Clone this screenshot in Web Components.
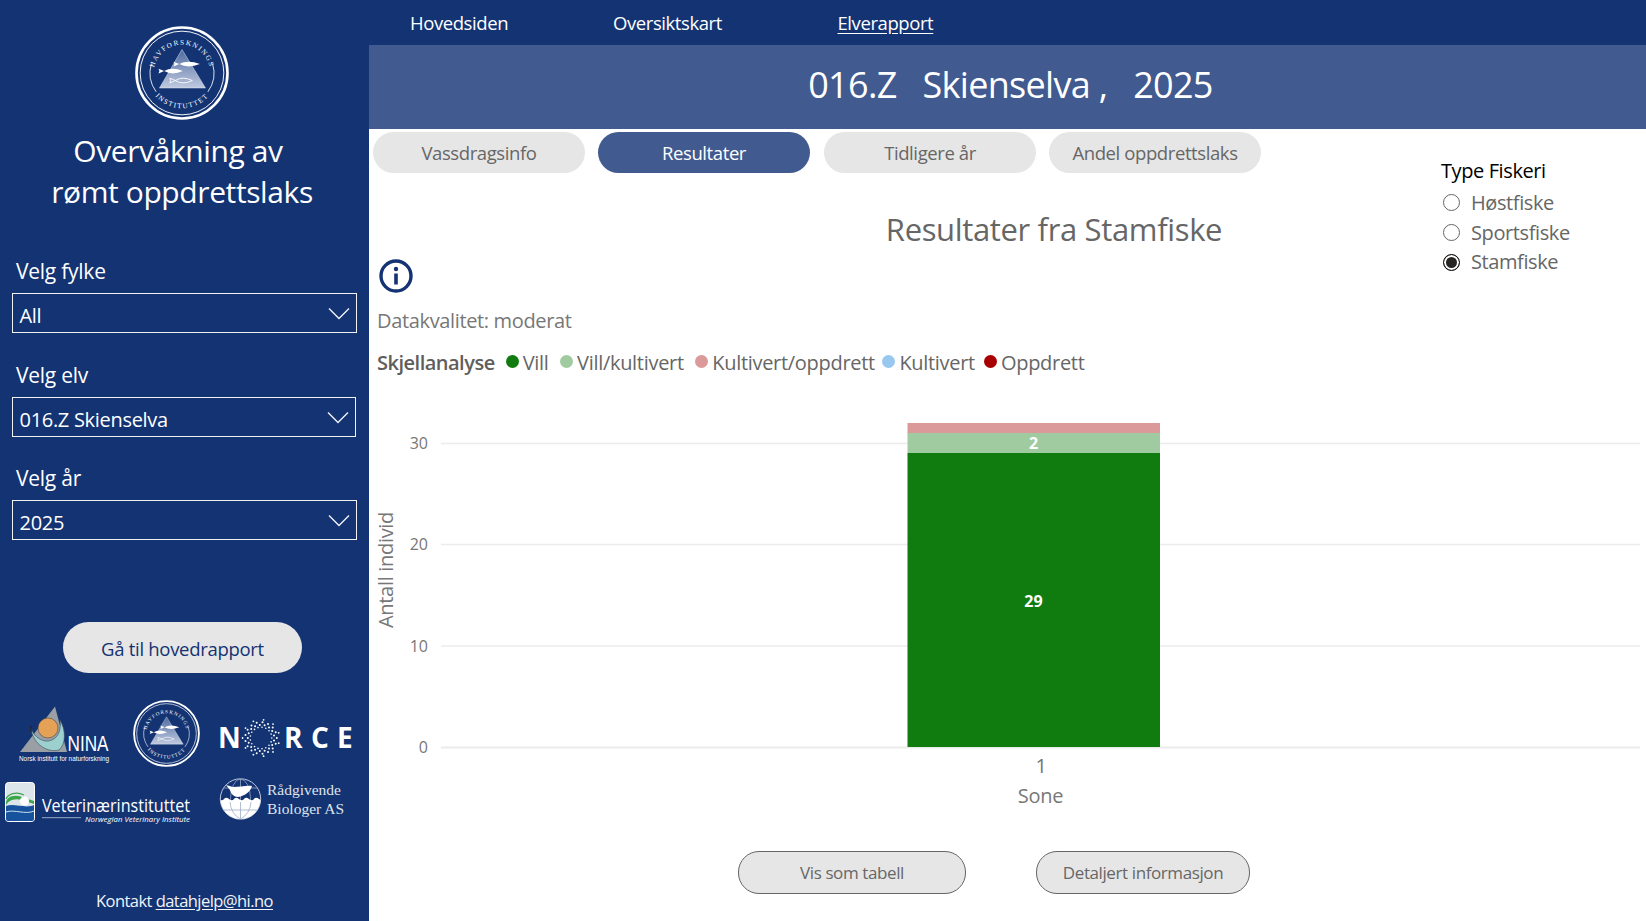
<!DOCTYPE html>
<html lang="no"><head><meta charset="utf-8"><title>Elverapport</title>
<style>
html,body{margin:0;padding:0;background:#fff;height:100%;overflow:hidden}
body{font-family:"Open Sans","Noto Sans",sans-serif;--navy:#133373;--blue:#415a8f;--grey:#e6e6e6;--txt:#666}
</style></head><body>
<app-shell>
  <side-bar slot="side"></side-bar>
  <top-nav slot="main"></top-nav>
  <title-banner slot="main">016.Z&nbsp;&nbsp; Skienselva ,&nbsp;&nbsp; 2025</title-banner>
  <result-view slot="main"></result-view>
</app-shell>
<script>
const def=(name,html,after)=>customElements.define(name,class extends HTMLElement{
  constructor(){super();const s=this.attachShadow({mode:'open'});s.innerHTML=typeof html==='function'?html(this):html;}
  connectedCallback(){const s=this.shadowRoot;if(typeof html==='function'&&!this._r){s.innerHTML=html(this);}this._r=1;if(after)after(s,this);}
});
const fish=(x0,x1,y,h,style)=>{const m=(x0+x1)/2,t=x0;return `<path d="M${x1} ${y}Q${m} ${y-h*2} ${t+3} ${y}L${t-3} ${y-h}L${t-2} ${y}L${t-3} ${y+h}L${t+3} ${y}Q${m} ${y+h*2} ${x1} ${y}Z" ${style}/>`};
def('hi-logo',h=>{const id='a'+Math.random().toString(36).slice(2,7);return `<style>:host{display:block;width:var(--s,94px);height:var(--s,94px)}svg{display:block;width:100%;height:100%}text{font-family:"Liberation Serif",serif;font-size:7.6px;fill:#fff;letter-spacing:1.5px}</style>
<svg viewBox="0 0 100 100" aria-label="Havforskningsinstituttet">
<defs><linearGradient id="${id}g" x1="0" y1="0" x2="0" y2="1"><stop offset="0" stop-color="#4f6aa0"/><stop offset="1" stop-color="#c0cae0"/></linearGradient>
<path id="${id}u" d="M20 50A30 30 0 0 1 80 50"/><path id="${id}l" d="M12.5 50A37.5 37.5 0 0 0 87.5 50"/></defs>
<circle cx="50" cy="50" r="48.4" fill="none" stroke="#fff" stroke-width="2.8"/><circle cx="50" cy="50" r="44.5" fill="none" stroke="#fff" stroke-width="1"/>
<path d="M17.5 40A34 34 0 0 0 22.5 70M82.5 40A34 34 0 0 1 77.5 70" fill="none" stroke="#fff" stroke-width=".9"/>
<text><textPath href="#${id}u" startOffset="50%" text-anchor="middle">HAVFORSKNINGS</textPath></text>
<text><textPath href="#${id}l" startOffset="50%" text-anchor="middle">INSTITUTTET</textPath></text>
<path d="M50 25L75 66H26Z" fill="url(#${id}g)" stroke="#e8ecf4" stroke-width=".5"/>
${fish(44,69,40.5,2.6,'fill="#fff"')}${fish(28,51,48,2.6,'fill="#fff"')}${fish(40,61,58,2.5,'fill="#a5b3d0" stroke="#fff" stroke-width=".9"')}
</svg>`});

def('nina-logo',`<style>:host{display:block;width:100px;height:67px}svg{display:block;overflow:visible}text{fill:#fff}</style>
<svg width="100" height="67" viewBox="15 700 100 67" aria-label="NINA">
<path d="M20 752L55 706.5L67 752Z" fill="#9a9fa5"/>
<path d="M31 728C33 745 48 753 59 750C66 744 66 730 60 720C62 735 54 742 45 741C37 739 33 734 31 728Z" fill="#9bd0cf" stroke="#3d4a5a" stroke-width=".6"/>
<path d="M31 726v6" stroke="#222" stroke-width="1.2"/>
<circle cx="48" cy="728" r="10" fill="#e5a257" stroke="#4a4a4a" stroke-width=".6"/>
<text x="67.5" y="751" style="font:400 22px 'Liberation Sans',sans-serif" textLength="41" lengthAdjust="spacingAndGlyphs">NINA</text>
<text x="19" y="761" style="font:400 8px 'Liberation Sans',sans-serif" textLength="90" lengthAdjust="spacingAndGlyphs" fill="#dbe0ea">Norsk institutt for naturforskning</text>
</svg>`);

def('norce-logo',`<style>:host{display:block;width:145px;height:67px}svg{display:block;overflow:visible}text{fill:#fff;font:700 28px "Open Sans",sans-serif}</style>
<svg width="145" height="67" viewBox="215 700 145 67" aria-label="NORCE"><text x="218" y="748">N</text><g id="d"></g><text x="284" y="748">R</text><text x="311" y="748">C</text><text x="337" y="748">E</text></svg>`,
s=>{let o='';[[10.8,17,.8],[13.2,17,1],[15.8,17,1],[18.4,11,.9]].forEach(([r,n,d],k)=>{for(let i=0;i<n;i++){const a=(i+(k%2)*.5)/n*6.283;o+=`<circle cx="${(261+r*Math.cos(a)).toFixed(1)}" cy="${(738+r*Math.sin(a)).toFixed(1)}" r="${d}" fill="#fff"/>`}});s.getElementById('d').innerHTML=o});

def('vet-logo',`<style>:host{display:block;width:195px;height:46px}svg{display:block;overflow:visible}text{fill:#fff}</style>
<svg width="195" height="46" viewBox="3 780 195 46" aria-label="Veterinærinstituttet">
<rect x="5.5" y="782.5" width="29" height="39" rx="3" fill="#dce6ea" stroke="#fff"/>
<path d="M6 803C6 797 14 794 22 797L34 801V804L22 800C14 798 9 800 6 805Z" fill="#3da54a"/><path d="M6 799C8 794 16 791 24 795" fill="none" stroke="#3da54a" stroke-width="1.3"/>
<circle cx="24.5" cy="801" r="4.6" fill="#fff"/>
<path d="M6 806C14 803 26 809 34 805V819Q34 821 32 821H8Q6 821 6 819Z" fill="#17539c"/>
<path d="M6 812C14 809 26 815 34 811" fill="none" stroke="#cfe0ee" stroke-width="1"/>
<text x="42" y="811.5" style="font:400 18px 'Open Sans',sans-serif" textLength="148" lengthAdjust="spacingAndGlyphs">Veterinærinstituttet</text>
<path d="M42 817.7H81" stroke="#bcc7dc" stroke-width=".8"/>
<text x="85" y="822" style="font:italic 400 8px 'Open Sans',sans-serif" textLength="105" lengthAdjust="spacingAndGlyphs">Norwegian Veterinary Institute</text>
</svg>`);

def('rb-logo',`<style>:host{display:block;width:140px;height:46px}svg{display:block;overflow:visible}text{fill:#dfe4ee;font:400 15.5px "Liberation Serif",serif}</style>
<svg width="140" height="46" viewBox="215 780 140 46" aria-label="Rådgivende Biologer AS">
<defs><clipPath id="gl"><circle cx="240.5" cy="799" r="20"/></clipPath></defs>
<circle cx="240.5" cy="799" r="20.2" fill="#133373" stroke="#cfd6e6" stroke-width=".9"/>
<g fill="none" stroke="#aab6d0" stroke-width=".7" clip-path="url(#gl)"><ellipse cx="240.5" cy="799" rx="10" ry="20"/><path d="M240.5 779V819M220 788H260"/></g>
<path d="M219 799q3 2.5 5 0t5 0 5 0 5 0 5 0 5 0 5 0 5 0 3 0V822H219Z" fill="#fff" clip-path="url(#gl)"/>
<g fill="none" stroke="#9fadc9" stroke-width=".8" clip-path="url(#gl)"><path d="M240.5 802V819M230 802Q231 814 240.5 819M251 802Q250 814 240.5 819M222 810H259"/></g>
<path d="M230 790L226 785L233 787C240 787 247 785 252 786C251 791 245 796 238 797C234 797 231 794 230 790Z" fill="#fff"/>
<text x="267" y="795" textLength="74" lengthAdjust="spacingAndGlyphs">Rådgivende</text><text x="267" y="814" textLength="77" lengthAdjust="spacingAndGlyphs">Biologer AS</text>
</svg>`);

def('drop-down',h=>`<style>:host{display:block;color:#fff}
.l{font-size:21px;line-height:28px;padding-left:16px;letter-spacing:-.25px}
.b{box-sizing:border-box;height:40px;margin:8px 0 0 12px;width:var(--w,345px);border:1.4px solid #f2f2f2;display:flex;align-items:center;justify-content:space-between;padding:0 6px 0 6.5px;font-size:20px;letter-spacing:-.3px}
.b span{padding-top:5px}
svg{display:block}</style>
<div class="l">${h.getAttribute('label')}</div>
<div class="b"><span>${h.getAttribute('value')}</span><svg width="22" height="13" viewBox="0 0 22 13"><path d="M1 1.5L11 11.5L21 1.5" fill="none" stroke="#f2f2f2" stroke-width="1.4"/></svg></div>`);

def('side-bar',`<style>:host{display:flex;flex-direction:column;width:369px;height:921px;background:var(--navy);color:#fff;box-sizing:border-box;padding-top:26px}
.logo{margin-left:135px}
h1{margin:10px 0 45px;font-weight:400;font-size:30px;line-height:41px;text-align:center;letter-spacing:-.4px}
h1 span{display:block}h1 .a{padding-right:13px}
h1 .b{padding-right:5px}
drop-down+drop-down{margin-top:28px}
.go{box-sizing:border-box;margin:82px 0 0 63px;padding-top:2px;width:239px;height:51px;border-radius:26px;background:var(--grey);color:var(--navy);display:flex;align-items:center;justify-content:center;font-size:18.5px;letter-spacing:-.3px}
.r1{display:flex;margin:27px 0 0 15px}.r2{display:flex;margin:13px 0 0 3px}
.r1 hi-logo{--s:67px;margin-left:18px}.r1 norce-logo{margin-left:15px}.r2 rb-logo{margin-left:17px}
.k{margin-top:63px;font-size:16.5px;line-height:24px;text-align:center;letter-spacing:-.55px;color:#f1f3f8}
.k u{text-underline-offset:2px}
</style>
<hi-logo class="logo"></hi-logo>
<h1><span class="a">Overvåkning av</span><span class="b">rømt oppdrettslaks</span></h1>
<drop-down label="Velg fylke" value="All"></drop-down>
<drop-down label="Velg elv" value="016.Z Skienselva" style="--w:344px"></drop-down>
<drop-down label="Velg år" value="2025" style="margin-top:27px"></drop-down>
<div class="go">Gå til hovedrapport</div>
<div class="r1"><nina-logo></nina-logo><hi-logo small></hi-logo><norce-logo></norce-logo></div>
<div class="r2"><vet-logo></vet-logo><rb-logo></rb-logo></div>
<div class="k">Kontakt <u>datahjelp@hi.no</u></div>`);

def('top-nav',`<style>:host{display:flex;height:45px;background:var(--navy);color:#fff;font-size:18.5px;letter-spacing:-.42px;align-items:center;padding:0 0 1px 41px;box-sizing:border-box}
span:nth-of-type(1){width:203px}span:nth-of-type(2){width:224.5px}u{text-underline-offset:3px}</style>
<span>Hovedsiden</span><span>Oversiktskart</span><u>Elverapport</u>`);

def('title-banner',`<style>:host{display:flex;height:84px;background:var(--blue);color:#fff;font-size:36px;letter-spacing:-.7px;align-items:center;justify-content:center;padding:0 0 6px 6px;box-sizing:border-box;white-space:pre}</style><slot></slot>`);

def('pill-btn',`<style>:host{box-sizing:border-box;display:flex;align-items:center;justify-content:center;width:212px;height:41px;border-radius:21px;background:var(--grey);color:var(--txt);font-size:18.5px;letter-spacing:-.4px}
:host([active]){background:var(--blue);color:#fff}
:host([outline]){height:43px;border:1.5px solid #666;font-size:17px;letter-spacing:-.4px}</style><slot></slot>`);

def('radio-group',`<style>:host{display:block;box-sizing:border-box;width:205px;padding-top:28px;font-size:20px;line-height:28px;letter-spacing:-.4px}
.h{color:#000;margin-bottom:3px}
.r{display:flex;align-items:center;height:29.7px;color:var(--txt);gap:11.5px;padding-left:1.5px}
i{box-sizing:border-box;width:17px;height:17px;border-radius:50%;border:1.3px solid #666;display:block}
.on i{border-color:#111;background:#252423;box-shadow:inset 0 0 0 2px #fff}</style>
<div class="h">Type Fiskeri</div><div class="r"><i></i>Høstfiske</div><div class="r"><i></i>Sportsfiske</div><div class="r on"><i></i>Stamfiske</div>`);

def('legend-row',`<style>:host{display:flex;align-items:center;height:28px;font-size:20px;letter-spacing:-.3px;color:var(--txt)}
b{font-weight:600;color:#605e5c;margin-right:11px;letter-spacing:-.5px}
.i{display:flex;align-items:center;gap:4px;margin-right:10px}
.i.a{margin-right:11.5px}.i.n{margin-right:7.5px}.i.k{margin-right:9px}
i{display:block;width:13px;height:13px;border-radius:50%;margin-top:-1px}</style>
<b>Skjellanalyse</b>
<span class="i a"><i style="background:#107c10"></i>Vill</span>
<span class="i a"><i style="background:#a0cba0"></i>Vill/kultivert</span>
<span class="i n"><i style="background:#db9999"></i>Kultivert/oppdrett</span>
<span class="i k"><i style="background:#98c8f0"></i>Kultivert</span>
<span class="i"><i style="background:#a80000"></i>Oppdrett</span>`);

def('bar-chart',`<style>:host{display:block;width:1277px;height:440px}svg{display:block}
text{font-family:"Open Sans",sans-serif;fill:#777}
.t{font-size:16px;text-anchor:end}.a{font-size:20px;letter-spacing:-.3px;text-anchor:middle}.v{font-size:16px;font-weight:700;fill:#fff;text-anchor:middle}</style>
<svg width="1277" height="440" viewBox="369 390 1277 440" role="img" aria-label="Antall individ per sone">
<g stroke="#ececec" stroke-width="1.3"><path d="M441 443.5H1640M441 544.5H1640M441 646H1640"/><path d="M441 747.5H1640" stroke-width="2"/></g>
<text class="t" x="428" y="449">30</text><text class="t" x="428" y="550">20</text><text class="t" x="428" y="652">10</text><text class="t" x="428" y="753">0</text>
<rect x="907.5" y="423" width="252.5" height="10.3" fill="#db9999"/><rect x="907.5" y="433" width="252.5" height="20.2" fill="#a0cba0"/><rect x="907.5" y="453" width="252.5" height="294" fill="#107c10"/>
<text class="v" x="1033.5" y="449">2</text><text class="v" x="1033.5" y="607">29</text>
<text class="a" transform="translate(393 570) rotate(-90)">Antall individ</text>
<text class="a" x="1041" y="773">1</text><text class="a" x="1040.5" y="803">Sone</text>
</svg>`);

def('result-view',`<style>:host{display:block;box-sizing:border-box;height:792px;color:var(--txt)}
.up{display:grid;grid-template-columns:1fr auto;height:122px}
.tabs{display:flex;gap:13px;padding:3px 0 0 4px}
.tabs pill-btn:nth-child(3){margin-left:1px}
h2{margin:35px 0 0;padding-left:298px;font-weight:400;font-size:31px;line-height:42px;text-align:center;letter-spacing:-.35px}
.left{min-width:0}
.info{display:block;margin:8px 0 0 10px}
.dq{margin:14px 0 0 8px;font-size:20px;line-height:28px;letter-spacing:-.35px;color:#777}
legend-row{margin:13px 0 14px 8px}
.btns{display:flex;gap:70px;padding:21px 0 0 369px}
.btns pill-btn:nth-child(1){width:228px}.btns pill-btn:nth-child(2){width:214px}</style>
<div class="up"><div class="left"><div class="tabs"><pill-btn>Vassdragsinfo</pill-btn><pill-btn active>Resultater</pill-btn><pill-btn>Tidligere år</pill-btn><pill-btn>Andel oppdrettslaks</pill-btn></div>
<h2>Resultater fra Stamfiske</h2></div><radio-group></radio-group></div>
<svg class="info" width="34" height="34" viewBox="0 0 34 34"><circle cx="17" cy="17" r="15" fill="none" stroke="#133373" stroke-width="3.4"/><circle cx="17" cy="10" r="2.2" fill="#133373"/><path d="M17 14.5V25.5" stroke="#133373" stroke-width="3.6"/></svg>
<div class="dq">Datakvalitet: moderat</div>
<legend-row></legend-row>
<bar-chart></bar-chart>
<div class="btns"><pill-btn outline>Vis som tabell</pill-btn><pill-btn outline>Detaljert informasjon</pill-btn></div>`);

def('app-shell',`<style>:host{display:grid;grid-template-columns:369px 1fr;width:1646px;height:921px;overflow:hidden}
.m{display:flex;flex-direction:column;min-width:0}</style><slot name="side"></slot><div class="m"><slot name="main"></slot></div>`);
</script>
</body></html>
